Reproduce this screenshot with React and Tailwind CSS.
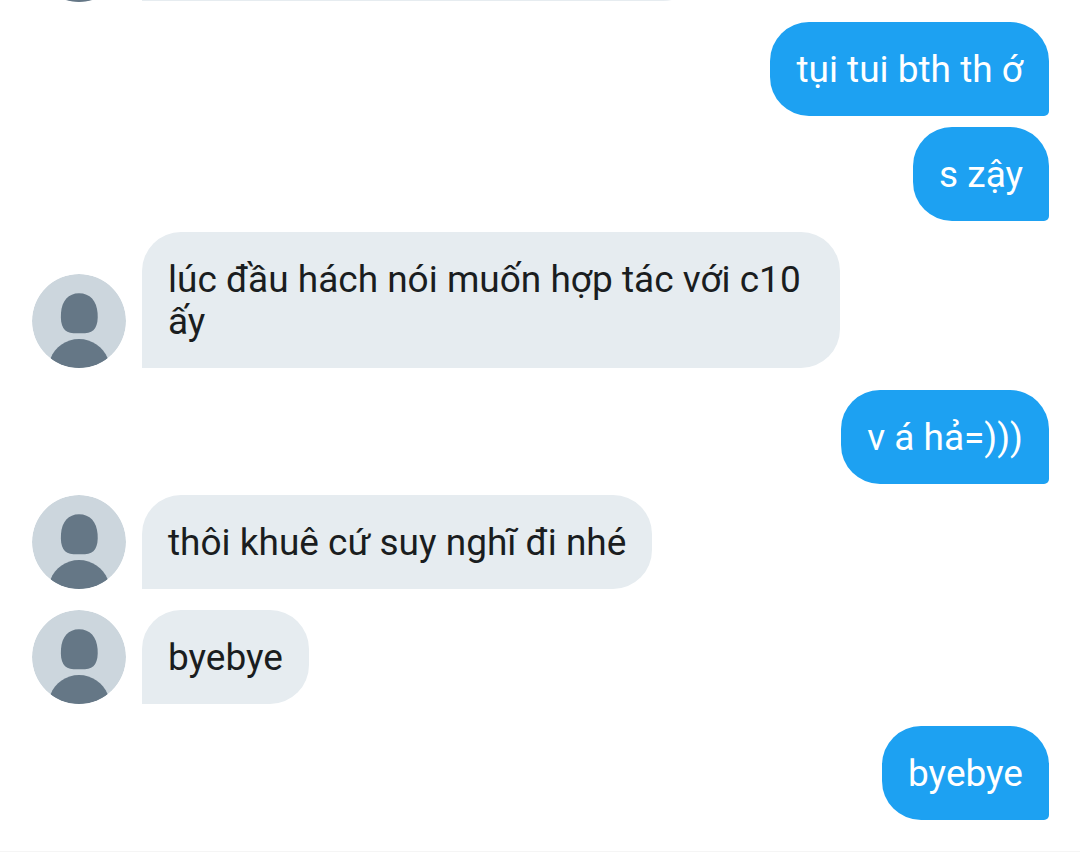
import React from 'react';
import clsx from 'clsx';

const MESSAGES = [
    { id: 1, mine: true, text: 'tụi tui bth th ớ', gap: 'mt-5' },
    { id: 2, mine: true, text: 's zậy', gap: 'mt-[11px]' },
    { id: 3, mine: false, text: 'lúc đầu hách nói muốn hợp tác với c10 ấy', gap: 'mt-[11px]' },
    { id: 4, mine: true, text: 'v á hả=)))', gap: 'mt-[22px]' },
    { id: 5, mine: false, text: 'thôi khuê cứ suy nghĩ đi nhé', gap: 'mt-[11px]' },
    { id: 6, mine: false, text: 'byebye', gap: 'mt-[21px]' },
    { id: 7, mine: true, text: 'byebye', gap: 'mt-[22px]' },
];

const Avatar = () => (
    <svg className="w-[94px] h-[94px] rounded-full shrink-0" viewBox="0 0 94 94" aria-hidden="true">
        <circle cx="47" cy="47" r="47" fill="#ccd6dd" />
        <path d="M47 19.3C58 19.3 64.8 27 65.6 39C66.6 52 62.5 59.2 53 59.2H41.5C32 59.2 28 52 29 39C29.8 27 36.5 19.3 47 19.3Z" fill="#657786" />
        <path d="M18.5 84.4C23 73 34 65 47 65S71 73 75.8 84.4C68 91 58 94 47 94S26 91 18.5 84.4Z" fill="#657786" />
    </svg>
);

const Message = ({ mine, text, gap }) => (
    <li className={clsx('flex items-end gap-4', mine && 'justify-end', gap)}>
        {!mine && <Avatar />}
        <p
            className={clsx(
                'max-w-[698px] px-[26px] pt-[27px] pb-[25px] text-[37px] leading-[42px] rounded-t-[39px]',
                mine
                    ? 'bg-[#1da1f2] text-white rounded-bl-[39px] rounded-br-[5px]'
                    : 'bg-[#e6ecf0] text-[#1a1d20] rounded-br-[39px]'
            )}
        >
            {text}
        </p>
    </li>
);

const App = () => {
    return (
        <main className="bg-white font-['Roboto','Noto_Sans',sans-serif]">
            <div className="pl-8 pr-[31px] pb-[31px]">
                {/* Tail of the message scrolled past the top edge */}
                <div className="flex items-end gap-4 h-[2px] overflow-hidden" aria-hidden="true">
                    <Avatar />
                    <div className="w-[560px] h-[94px] mb-px shrink-0 bg-[#e6ecf0] rounded-t-[39px] rounded-br-[39px]" />
                </div>

                <ul>
                    {MESSAGES.map((message) => (
                        <Message key={message.id} {...message} />
                    ))}
                </ul>
            </div>
            <div className="border-t border-[#f5f5f5]" />
        </main>
    );
};

export default App;
